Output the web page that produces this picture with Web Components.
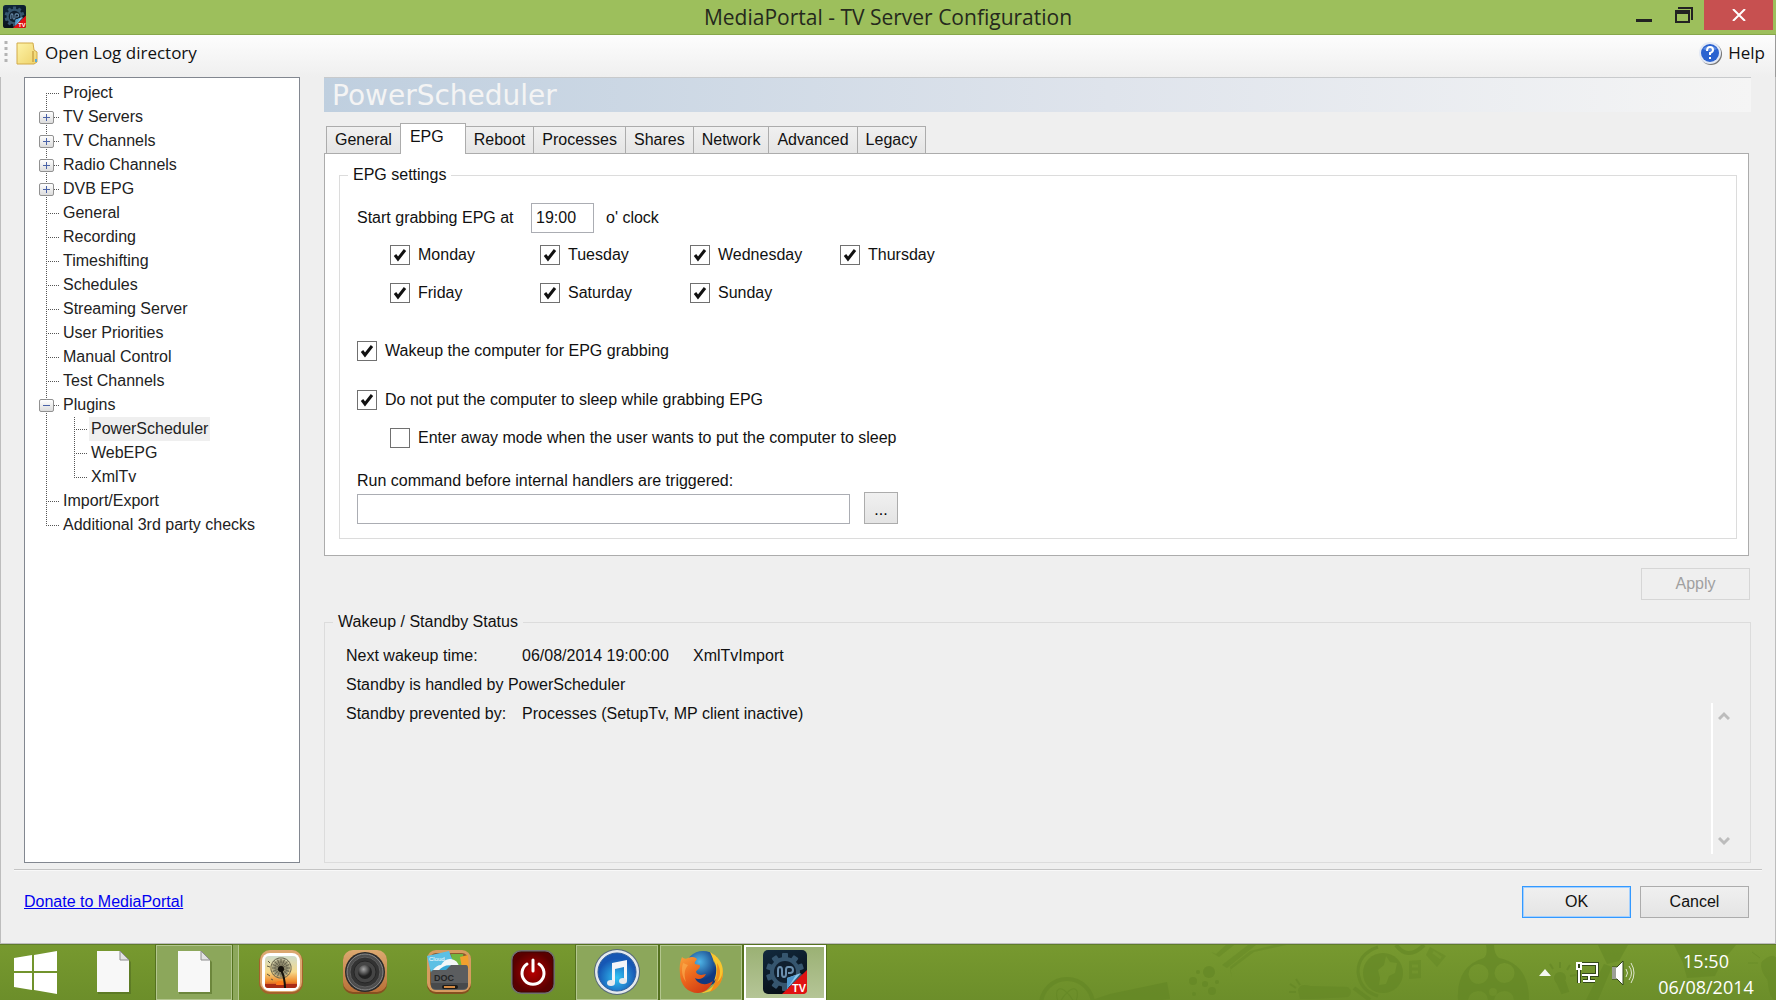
<!DOCTYPE html>
<html lang="en">
<head>
<meta charset="utf-8">
<title>MediaPortal - TV Server Configuration</title>
<style>
  html, body { height: 100%; margin: 0; }
  body {
    --ui: "Liberation Sans", Arial, sans-serif;
    --segoe: "Open Sans", "Noto Sans", sans-serif;
    --face: #efefef;
    --line: #dcdcdc;
    --edge: #acacac;
    display: flex;
    flex-direction: column;
    background: var(--face);
    color: #111;
    font: 16px/20px var(--ui);
  }
  setup-window { flex: 1; }
</style>
</head>
<body>

<setup-window caption="MediaPortal - TV Server Configuration">
  <tree-view slot="tree">
    <tree-node label="Project"></tree-node>
    <tree-node label="TV Servers" state="closed"></tree-node>
    <tree-node label="TV Channels" state="closed"></tree-node>
    <tree-node label="Radio Channels" state="closed"></tree-node>
    <tree-node label="DVB EPG" state="closed"></tree-node>
    <tree-node label="General"></tree-node>
    <tree-node label="Recording"></tree-node>
    <tree-node label="Timeshifting"></tree-node>
    <tree-node label="Schedules"></tree-node>
    <tree-node label="Streaming Server"></tree-node>
    <tree-node label="User Priorities"></tree-node>
    <tree-node label="Manual Control"></tree-node>
    <tree-node label="Test Channels"></tree-node>
    <tree-node label="Plugins" state="open">
      <tree-node label="PowerScheduler" selected></tree-node>
      <tree-node label="WebEPG"></tree-node>
      <tree-node label="XmlTv"></tree-node>
    </tree-node>
    <tree-node label="Import/Export"></tree-node>
    <tree-node label="Additional 3rd party checks"></tree-node>
  </tree-view>

  <section-header slot="page">PowerScheduler</section-header>
  <tab-panel slot="page" tabs="General,EPG,Reboot,Processes,Shares,Network,Advanced,Legacy" current="EPG">
    <epg-settings></epg-settings>
  </tab-panel>
  <push-button slot="page" class="apply" label="Apply" disabled></push-button>
  <standby-status slot="page"></standby-status>
</setup-window>

<task-bar time="15:50" date="06/08/2014">
  <task-item icon="page" label="Document"></task-item>
  <task-item icon="page" label="Documents" state="stacked"></task-item>
  <task-item icon="photo" label="Photos"></task-item>
  <task-item icon="speaker" label="Speaker"></task-item>
  <task-item icon="docs" label="Files"></task-item>
  <task-item icon="power" label="Power"></task-item>
  <task-item icon="itunes" label="iTunes" state="running"></task-item>
  <task-item icon="firefox" label="Firefox" state="running"></task-item>
  <task-item icon="mediaportal" label="MediaPortal" state="active"></task-item>
</task-bar>

<script>
const GEAR = Array.from({ length: 10 }, (_, i) =>
  `<rect x="19" y="3" width="6" height="8" rx="1" transform="rotate(${i * 36} 22 22)"/>`).join('');

const DANDELION = Array.from({ length: 16 }, (_, i) =>
  `<path d="M22 18V9M20 8h4M21 12h2" transform="rotate(${i * 22.5} 22 18)"/>`).join('');

const ICONS = {
  page: `
    <path d="M6 2h24l9 9v32H6z" fill="#4b661d" opacity=".5" transform="translate(1 1)"/>
    <path d="M6 1h23l9 9v32H6z" fill="#f8f8f8"/>
    <path d="M29 1v9h9z" fill="#e2e2e2" stroke="#8c8c8c"/>`,

  photo: `
    <defs><linearGradient id="dusk" x2="0" y2="1">
      <stop stop-color="#cfdccb"/><stop offset=".5" stop-color="#f6d98a"/>
      <stop offset=".8" stop-color="#ef8a2c"/><stop offset="1" stop-color="#b9281a"/>
    </linearGradient></defs>
    <rect y="1" width="44" height="43" rx="11" fill="#a4622b"/>
    <rect x="1" width="42" height="42" rx="10" fill="#dba770"/>
    <rect x="3" y="3" width="38" height="38" rx="8" fill="#fff"/>
    <rect x="6" y="6" width="32" height="32" rx="4" fill="url(#dusk)"/>
    <path d="M6 34h32v1a3 3 0 0 1-3 3H9a3 3 0 0 1-3-3z" fill="#a92c16"/>
    <path d="M17 35a4 4 0 0 1 8 0z" fill="#ff7a1c"/>
    <circle cx="22" cy="18" r="9" fill="#a9a483"/>
    <g fill="none" stroke="#6a6650" stroke-width="1">${DANDELION}</g>
    <circle cx="22" cy="19" r="3" fill="#15120c"/>
    <path d="M22 20q4 8 4 18" fill="none" stroke="#15120c" stroke-width="2"/>
    <path d="M8 16l3 1M8 24l3 2M12 29l2 1M9 11l2 2" stroke="#5d5a42"/>`,

  speaker: `
    <defs><radialGradient id="dome" cx=".4" cy=".3"><stop stop-color="#a5a5a5"/><stop offset="1" stop-color="#222"/></radialGradient>
    <linearGradient id="wood" x2="0" y2="1"><stop stop-color="#dca970"/><stop offset="1" stop-color="#b97138"/></linearGradient></defs>
    <rect y="1" width="44" height="43" rx="10" fill="#86501f"/>
    <rect width="44" height="42" rx="10" fill="url(#wood)"/>
    <circle cx="22" cy="22" r="20" fill="#2a2a2a"/>
    <circle cx="22" cy="22" r="18" fill="#4e4e4e" stroke="#8b8b8b"/>
    <circle cx="22" cy="22" r="15" fill="#333" stroke="#5e5e5e"/>
    <circle cx="22" cy="22" r="11" fill="#454545" stroke="#262626"/>
    <circle cx="22" cy="22" r="7" fill="url(#dome)"/>`,

  docs: `
    <rect y="1" width="44" height="43" rx="9" fill="#86501f"/>
    <rect width="44" height="42" rx="9" fill="#d69c60"/>
    <rect x="3" y="3" width="38" height="36" rx="6" fill="#8a5a2e"/>
    <path d="M24 4h12l2 14H26z" fill="#72b53e"/>
    <path d="M33 7l8-2 1 13h-7z" fill="#f1a02e"/>
    <path d="M0 6l22-5 7 18-25 4z" fill="#5cc0e4"/>
    <path d="M6 20q4-5 8-5 4-7 10-6 7 1 8 8l2 4" fill="#f4f7f8"/>
    <path d="M11 21q8-9 18-4l2 4" fill="#35a7d6"/>
    <text x="2" y="11" font-family="Liberation Sans, sans-serif" font-size="6" fill="#fff">Cloud</text>
    <path d="M4 23q0-3 3-3h12l5-5h15q2 0 2 3v17q0 5-5 5H9q-5 0-5-5z" fill="#5b5d5f"/>
    <path d="M4 33h37v2q0 4-5 4H9q-5 0-5-4z" fill="#484a4c"/>
    <text x="7" y="31" font-family="Liberation Sans, sans-serif" font-size="9" font-weight="700" fill="#232425">DOC</text>
    <rect x="15" y="35" width="16" height="4" rx="2" fill="#1c1a18"/><rect x="17" y="36" width="11" height="2" fill="#d58b44"/>`,

  power: `
    <defs><radialGradient id="red"><stop stop-color="#b80000"/><stop offset="1" stop-color="#5a0000"/></radialGradient></defs>
    <rect width="44" height="44" rx="10" fill="#6f6f6f"/>
    <rect x="2" y="2" width="40" height="40" rx="8" fill="url(#red)" stroke="#3f0505"/>
    <path d="M16 14a11 11 0 1 0 12 0" fill="none" stroke="#fff" stroke-width="3" stroke-linecap="round"/>
    <path d="M22 10v11" stroke="#fff" stroke-width="3" stroke-linecap="round"/>`,

  itunes: `
    <defs><radialGradient id="blue" cy=".65"><stop stop-color="#32c4f4"/><stop offset="1" stop-color="#1657b4"/></radialGradient></defs>
    <circle cx="22" cy="22" r="23" fill="#56697a"/>
    <circle cx="22" cy="22" r="22" fill="#e4e9ee"/>
    <circle cx="22" cy="22" r="19" fill="url(#blue)" stroke="#2b5c9c"/>
    <path d="M17 13l15-3v21h-3V17l-9 2v14h-3z" fill="#f4f6f8"/>
    <ellipse cx="16" cy="33" rx="4" ry="3" fill="#e6eaee"/>
    <ellipse cx="28" cy="31" rx="4" ry="3" fill="#e6eaee"/>`,

  firefox: `
    <defs><radialGradient id="globe" cx=".4" cy=".3"><stop stop-color="#4fb6e8"/><stop offset="1" stop-color="#12397f"/></radialGradient>
    <linearGradient id="fox" x2=".6" y2="1"><stop stop-color="#f9a13a"/><stop offset=".5" stop-color="#ee6a1d"/><stop offset="1" stop-color="#d33f14"/></linearGradient></defs>
    <circle cx="24" cy="19" r="18" fill="url(#globe)"/>
    <path d="M31 2c8 4 13 11 13 20 0 12-10 21-22 21 9-3 15-8 16-15l-3 3c3-8 3-14 0-20l1 6c-1-6-3-11-5-15z" fill="#f8c62e"/>
    <path d="M38 13c4 6 4 13 0 19 5-3 6-9 5-14 3 12-4 21-12 24 5-7 8-18 7-29z" fill="#f28c1c"/>
    <path d="M3 7c2 2 4 2 6 1 4-2 7-1 9 1-1 2-3 3-2 5 2 1 5 0 5 2 0 3-4 4-4 6 2 4 7 3 10 2-2 5-8 6-11 4 3 7 12 8 18 3-3 8-9 12-15 12C9 43 1 35 1 24 0 17 1 12 3 7z" fill="url(#fox)"/>
    <path d="M4 13c-2 7-1 14 3 19-2-7-2-12 2-17z" fill="#fbb254" opacity=".6"/>`,

  mediaportal: `
    <defs><linearGradient id="navy" x2=".4" y2="1"><stop stop-color="#122a3e"/><stop offset="1" stop-color="#070f18"/></linearGradient></defs>
    <rect width="44" height="44" rx="5" fill="url(#navy)"/>
    <g fill="#36566f">${GEAR}<circle cx="22" cy="22" r="15"/></g>
    <circle cx="22" cy="22" r="11" fill="#101f2e"/>
    <path d="M15 27v-7q0-3 2-3t2 3v4q0 3 2 3t2-3v-4q0-3 2-3h2q3 0 3 3t-3 3h-2" fill="none" stroke="#6b8fae" stroke-width="2"/>
    <path d="M44 20v20q0 4-4 4H19z" fill="#e01212"/>
    <path d="M24 39V28l14-5z" fill="#8cc8ee"/>
    <path d="M24 39V28l9-3z" fill="#4f97cc"/>
    <text x="29" y="42" font-family="Liberation Sans, sans-serif" font-size="11" font-weight="700" fill="#fff">TV</text>`
};

function icon(name, size) {
  return `<svg viewBox="0 0 44 44" width="${size}" height="${size}" overflow="visible" aria-hidden="true">${ICONS[name]}</svg>`;
}

/** Base: every element renders once into an open shadow root */
class UiElement extends HTMLElement {
  constructor() {
    super();
    this.attachShadow({ mode: 'open' });
  }

  connectedCallback() {
    this.shadowRoot.innerHTML = this.render();
  }
}

/** <setup-window> — title bar, tool strip, tree + page, footer. Slots: tree, page */
class SetupWindow extends UiElement {
  render() {
    const caption = this.getAttribute('caption') || '';
    return `
      <style>
        :host { display: flex; flex-direction: column; min-height: 0; }

        header {
          display: grid;
          grid-template-columns: 1fr auto 1fr;
          align-items: center;
          height: 34px;
          background: #9dbf5c;
          border-bottom: 1px solid #87a74b;
        }
        header svg { display: block; }
        .app { padding: 0 0 2px 3px; }
        h1 { margin: 0; font: 21px/34px var(--segoe); color: #25291d; }
        .controls { display: flex; justify-content: flex-end; align-self: start; padding-right: 3px; }
        .controls button {
          width: 40px; height: 30px; padding: 0; border: 0; background: none;
          display: grid; place-items: center;
        }
        .controls button.close { width: 69px; background: #c75050; }

        .strip {
          display: flex;
          align-items: center;
          height: 42px;
          background: linear-gradient(#fdfdfd, #efefef);
          border-right: 1px solid #9a9a9a;
        }
        .strip button {
          display: flex; align-items: center; gap: 6px;
          padding: 0 10px 6px 8px; border: 0; background: none;
          font: 17px/24px var(--segoe); color: #111;
        }
        .strip .grip { padding: 0 0 6px 4px; }
        .strip .spacer { flex: 1; }

        .client {
          flex: 1;
          display: flex;
          flex-direction: column;
          min-height: 0;
          border: solid #bdbdbd;
          border-width: 0 1px 1px;
        }
        .body {
          flex: 1;
          display: flex;
          gap: 24px;
          padding: 0 24px 0 23px;
          min-height: 0;
        }
        .page { flex: 1; display: flex; flex-direction: column; min-width: 0; }
        ::slotted(tree-view) { width: 274px; }
        ::slotted(tab-panel) { margin: 11px 2px 12px 0; }
        ::slotted(.apply) { align-self: flex-end; margin-right: 1px; margin-bottom: 12px; }
        ::slotted(standby-status) { flex: 1; }

        footer {
          display: flex;
          align-items: center;
          gap: 9px;
          margin: 6px 13px 0;
          padding: 16px 13px 25px 10px;
          border-top: 1px solid #c4c4c4;
          box-shadow: inset 0 1px #f8f8f8;
        }
        footer a { color: #0000f0; margin-right: auto; }
      </style>
      <header>
        <span class="app">${icon('mediaportal', 23)}</span>
        <h1>${caption}</h1>
        <div class="controls">
          <button aria-label="Minimize"><svg width="16" height="16"><path d="M0 12h16v3H0z" fill="#222"/></svg></button>
          <button aria-label="Restore"><svg width="18" height="16"><path d="M3 0h15v13h-2V2H3zM0 3h15v13H0zM2 7v7h11V7z" fill="#222" fill-rule="evenodd"/></svg></button>
          <button class="close" aria-label="Close"><svg width="14" height="12"><path d="M1 0l12 12M13 0L1 12" stroke="#fff" stroke-width="2"/></svg></button>
        </div>
      </header>
      <div class="strip">
        <span class="grip"><svg width="4" height="22"><path d="M2 1v21" stroke="#b4b4b4" stroke-width="3" stroke-dasharray="3 3"/></svg></span>
        <button>
          <svg width="23" height="24"><defs><linearGradient id="f" x2="1" y2="1"><stop stop-color="#fdf3a8"/><stop offset="1" stop-color="#eed26a"/></linearGradient></defs>
            <path d="M1 2h16l1 7 3 2v10l-3 2H1z" fill="url(#f)" stroke="#d2aa48"/><path d="M17 10v11" stroke="#b98b2c"/><path d="M19 18h2v3h-2z" fill="#5aa7d8"/></svg>
          Open Log directory
        </button>
        <span class="spacer"></span>
        <button>
          <svg width="24" height="24"><circle cx="13" cy="13" r="11" fill="#777"/><circle cx="12" cy="12" r="11" fill="#e3e9f5"/><circle cx="12" cy="12" r="9" fill="#2a62d0"/>
            <path d="M5 8a8 6 0 0 1 14 0q-7 4-14 0z" fill="#7fa8ee" opacity=".6"/>
            <path d="M9 10q0-4 3-4t3 3q0 2-3 3v2M12 16v2" fill="none" stroke="#fff" stroke-width="2"/></svg>
          Help
        </button>
      </div>
      <div class="client">
        <div class="body">
          <slot name="tree"></slot>
          <main class="page"><slot name="page"></slot></main>
        </div>
        <footer>
          <a href="#donate">Donate to MediaPortal</a>
          <push-button label="OK" primary></push-button>
          <push-button label="Cancel"></push-button>
        </footer>
      </div>
    `;
  }
}

/** <push-button> — label, primary, disabled */
class PushButton extends UiElement {
  render() {
    const off = this.hasAttribute('disabled') ? 'disabled' : '';
    return `
      <style>
        :host { display: block; }
        button {
          display: block;
          width: 109px;
          height: 32px;
          padding: 0;
          border: 1px solid var(--edge);
          background: linear-gradient(#f0f0f0, #e4e4e4);
          font: inherit;
          color: #111;
        }
        :host([primary]) button { border-color: #3399ff; box-shadow: inset 0 0 0 1px #a3d0ff; }
        button:disabled { background: none; border-color: #d6d6d6; color: #a0a0a0; }
      </style>
      <button ${off}>${this.getAttribute('label')}</button>
    `;
  }
}

/** <tree-view> — frame of the navigation tree */
class TreeView extends UiElement {
  render() {
    return `
      <style>
        :host {
          display: block;
          padding-top: 3px;
          border: 1px solid #828790;
          background: #fff;
          color: #222;
        }
        ::slotted(:first-child) { --line-top: 12px; }
      </style>
      <slot></slot>
    `;
  }
}

/** <tree-node> — label, state (open | closed), selected; nested nodes go in the slot */
class TreeNode extends UiElement {
  render() {
    const state = this.getAttribute('state');
    const box = state ? `
      <button aria-label="${state === 'open' ? 'Collapse' : 'Expand'}">
        <svg width="7" height="7"><path d="M0 3h7v1H0z${state === 'closed' ? 'M3 0h1v7H3z' : ''}" fill="#4b63a7"/></svg>
      </button>` : '';
    return `
      <style>
        :host {
          display: block;
          background: repeating-linear-gradient(#555 0 1px, transparent 1px 2px) 21px var(--line-top, 0px) / 1px 100% no-repeat;
        }
        :host(:last-child) { background-size: 1px 13px; }
        .row { display: flex; align-items: center; height: 24px; }
        .gutter {
          box-sizing: border-box;
          width: 36px;
          height: 24px;
          padding: 6px 0 0 14px;
          background: repeating-linear-gradient(90deg, #555 0 1px, transparent 1px 2px) 21px 12px / 13px 1px no-repeat;
        }
        button {
          display: grid;
          place-items: center;
          box-sizing: border-box;
          width: 15px;
          height: 13px;
          padding: 0;
          border: 1px solid #919191;
          border-radius: 2px;
          background: linear-gradient(#fff, #dcdcdc);
        }
        .label { padding: 0 2px; line-height: 24px; }
        :host([selected]) .label { background: #efefef; }
        .kids { padding-left: 28px; }
      </style>
      <div class="row"><span class="gutter">${box}</span><span class="label">${this.getAttribute('label')}</span></div>
      <div class="kids"><slot></slot></div>
    `;
  }
}

class SectionHeader extends UiElement {
  render() {
    return `
      <style>
        :host {
          display: block;
          border-top: 1px solid #c8cacc;
          background: linear-gradient(90deg, #bfcfdf, #dfe4ec 55%, #f5f5f5);
        }
        h2 { margin: 0; padding: 1px 0 0 8px; font: 28px/33px "DejaVu Sans", Verdana, sans-serif; color: #f4f4f4; }
      </style>
      <h2><slot></slot></h2>
    `;
  }
}

/** <tab-panel> — tabs (comma list), current */
class TabPanel extends UiElement {
  render() {
    const current = this.getAttribute('current');
    const tabs = this.getAttribute('tabs').split(',').map(name =>
      `<button role="tab" aria-selected="${name === current}">${name}</button>`).join('');
    return `
      <style>
        :host { display: block; }
        nav { display: flex; align-items: flex-end; padding-left: 2px; height: 31px; margin-bottom: -1px; }
        button {
          height: 28px;
          padding: 0 8px;
          margin-right: -1px;
          border: 1px solid var(--edge);
          background: linear-gradient(#f0f0f0, #e5e5e5);
          font: inherit;
          color: #111;
        }
        button[aria-selected="true"] {
          position: relative;
          height: 31px;
          padding: 0 21px 4px 9px;
          border-bottom: 0;
          background: #fff;
        }
        .panel { border: 1px solid var(--edge); background: #fff; padding: 11px 11px 16px 14px; }
      </style>
      <nav role="tablist">${tabs}</nav>
      <div class="panel" role="tabpanel"><slot></slot></div>
    `;
  }
}

class CheckBox extends UiElement {
  render() {
    const on = this.hasAttribute('checked') ? 'checked' : '';
    return `
      <style>
        :host { display: block; }
        label { display: flex; align-items: center; gap: 8px; height: 20px; }
        .box { display: grid; }
        input, svg { grid-area: 1 / 1; }
        input {
          appearance: none;
          box-sizing: border-box;
          width: 20px;
          height: 20px;
          margin: 0;
          border: 1px solid #707070;
          background: #fff;
        }
        svg { pointer-events: none; visibility: hidden; }
        input:checked + svg { visibility: visible; }
      </style>
      <label>
        <span class="box"><input type="checkbox" ${on}><svg width="20" height="20"><path d="M5 10l3 4 7-9" fill="none" stroke="#111" stroke-width="3"/></svg></span>
        <slot></slot>
      </label>
    `;
  }
}

/** <group-box> — framed fieldset with a caption */
class GroupBox extends UiElement {
  render() {
    return `
      <style>
        :host { display: flex; }
        fieldset {
          flex: 1;
          display: flex;
          flex-direction: column;
          min-width: 0;
          margin: 0;
          padding: var(--group-padding, 10px);
          border: 1px solid var(--line);
        }
        legend { padding: 0 5px; margin-left: var(--legend-indent, 0); line-height: 20px; }
      </style>
      <fieldset><legend>${this.getAttribute('label')}</legend><slot></slot></fieldset>
    `;
  }
}

class EpgSettings extends UiElement {
  render() {
    const days = ['Monday', 'Tuesday', 'Wednesday', 'Thursday', 'Friday', 'Saturday', 'Sunday'];
    return `
      <style>
        :host { display: block; }
        group-box { --group-padding: 18px 17px 14px; --legend-indent: -9px; }
        .start { display: flex; align-items: center; }
        input {
          box-sizing: border-box;
          height: 30px;
          padding: 0 4px;
          border: 1px solid #abadb3;
          background: #fff;
          font: inherit;
          color: #111;
        }
        .start label { width: 174px; }
        .start input { width: 63px; margin-right: 12px; }
        .days {
          display: grid;
          grid-template-columns: repeat(4, 150px);
          row-gap: 18px;
          margin: 12px 0 38px 33px;
        }
        .away { margin: 18px 0 23px 33px; }
        .sleep { margin-top: 29px; }
        .run { display: flex; align-items: flex-end; gap: 14px; margin-top: 1px; }
        .run input { width: 493px; }
        .run button {
          width: 34px; height: 32px; padding: 4px 0 0;
          border: 1px solid var(--edge);
          background: linear-gradient(#f0f0f0, #e4e4e4);
          font: inherit;
        }
      </style>
      <group-box label="EPG settings">
        <div class="start">
          <label for="start">Start grabbing EPG at</label>
          <input id="start" value="19:00">
          <span>o' clock</span>
        </div>
        <div class="days">${days.map(d => `<check-box checked>${d}</check-box>`).join('')}</div>
        <check-box checked>Wakeup the computer for EPG grabbing</check-box>
        <check-box checked class="sleep">Do not put the computer to sleep while grabbing EPG</check-box>
        <check-box class="away">Enter away mode when the user wants to put the computer to sleep</check-box>
        <label for="command">Run command before internal handlers are triggered:</label>
        <div class="run"><input id="command"><button aria-label="Browse">...</button></div>
      </group-box>
    `;
  }
}

class StandbyStatus extends UiElement {
  render() {
    return `
      <style>
        :host { display: flex; }
        group-box { flex: 1; --group-padding: 9px 15px 8px 21px; --legend-indent: -13px; }
        .line { display: grid; grid-template-columns: 176px 171px 1fr; line-height: 29px; }
        .handled { grid-column: 1 / 3; }
        .fill { flex: 1; grid-template-columns: 176px 1fr 24px; }
        .scroll {
          display: flex;
          flex-direction: column;
          justify-content: space-between;
          align-items: center;
          margin-top: 4px;
          padding: 8px 0;
          border-left: 2px solid #fff;
        }
      </style>
      <group-box label="Wakeup / Standby Status">
        <div class="line"><span>Next wakeup time:</span><span>06/08/2014 19:00:00</span><span>XmlTvImport</span></div>
        <div class="line"><span class="handled">Standby is handled by PowerScheduler</span></div>
        <div class="line fill">
          <span>Standby prevented by:</span><span>Processes (SetupTv, MP client inactive)</span>
          <div class="scroll">
            <svg width="12" height="10"><path d="M1 8l5-5 5 5" fill="none" stroke="#bcbcbc" stroke-width="3"/></svg>
            <svg width="12" height="10"><path d="M1 2l5 5 5-5" fill="none" stroke="#bcbcbc" stroke-width="3"/></svg>
          </div>
        </div>
      </group-box>
    `;
  }
}

/** <task-item> — icon, label, state (running | stacked | active) */
class TaskItem extends UiElement {
  render() {
    return `
      <style>
        :host { display: flex; width: 84px; padding: 0 1px; box-sizing: border-box; z-index: 1; }
        button {
          flex: 1;
          display: grid;
          place-items: center;
          padding: 0 0 1px;
          border: 1px solid transparent;
          background: none;
        }
        :host([state]) button {
          border-color: #b3c68e;
          background: #8ca75b;
          outline: 1px solid #54711f;
        }
        :host([state="active"]) button { border: 2px solid #fff; background: linear-gradient(#9bb174, #b5c597); }
        :host([state="stacked"]) button { margin-right: 5px; }
        :host([state="stacked"]) { border-right: 1px solid #b3c68e; background: linear-gradient(#8ca75b, #8ca75b) right / 6px no-repeat; }
      </style>
      <button aria-label="${this.getAttribute('label')}">${icon(this.getAttribute('icon'), 44)}</button>
    `;
  }
}

/** <task-bar> — time, date; task items go in the slot */
class TaskBar extends UiElement {
  render() {
    return `
      <style>
        :host {
          position: relative;
          display: flex;
          height: 56px;
          box-sizing: border-box;
          border-top: 1px solid #5f7c2b;
          background: linear-gradient(#77992f, #6c8e2a);
          color: #fff;
        }
        .start { width: 71px; padding: 0; border: 0; background: none; }
        .start svg { display: block; margin: auto; }
        /* faint wallpaper doodles behind the tray */
        .doodles { position: absolute; right: 0; top: 0; }
        .tray { display: flex; align-items: center; margin-left: auto; z-index: 1; }
        .tray button { padding: 0; border: 0; background: none; display: flex; }
        .arrow { margin-right: 24px; }
        .net { margin-right: 12px; }
        time { display: block; width: 140px; padding-top: 3px; text-align: center; font: 18px/26px var(--segoe); }
      </style>
      <svg class="doodles" width="760" height="55" viewBox="1016 945 760 55" fill="#638625" opacity=".6">
        <g fill="none" stroke="#638625" stroke-width="4"><circle cx="1067" cy="1005" r="26"/><ellipse cx="1067" cy="1004" rx="7" ry="17" transform="rotate(-30 1067 1004)" stroke-width="1"/><ellipse cx="1067" cy="1004" rx="7" ry="17" transform="rotate(30 1067 1004)" stroke-width="1"/></g>
        <path d="M1092 1000l18-6 57-12 3 17-8 1z"/>
        <g><circle cx="1209" cy="972" r="6"/><circle cx="1193" cy="981" r="4"/><circle cx="1205" cy="984" r="3"/><circle cx="1212" cy="991" r="4"/><circle cx="1217" cy="982" r="2"/><circle cx="1198" cy="972" r="2"/><circle cx="1194" cy="994" r="2"/></g>
        <path d="M1211 952l8 5 15-12h-8l-10 9zM1222 965l26-20h8l-29 23zM1230 970l24-18 32-7h-12l-24 6-20 16 2 10z" opacity=".7"/>
        <path d="M1298 990q2-7 12-4l38 1q6 5 0 10l-36 2h-12z" opacity=".8"/><path d="M1289 992h7M1290 984l6 4M1296 979l4 6" stroke="#638625" stroke-width="2"/>
        <circle cx="1383" cy="973" r="20"/><path d="M1378 996q-18-5-20-24 0-18 20-25" fill="none" stroke="#638625" stroke-width="3"/>
        <path d="M1386 956l4 6 7 1-2 10-6 3-3 8-7 1 1-7-2-8 6-5z" fill="#72942d"/>
        <path d="M1396 945q12 16 28 0M1354 988l16 12" fill="none" stroke="#638625" stroke-width="4"/>
        <path d="M1430 947l16 9-9 11-11-12zM1409 961l12-1v18l-12 1z" opacity=".7"/>
        <path d="M1433 952l8 6M1412 966h6M1412 972h6" stroke="#72942d" stroke-width="3"/>
        <path fill-rule="evenodd" d="M1486 945h8q0 9 5 13 30 6 30 42H1458q-2-34 26-42 4-4 2-13zM1478 964a10 10 0 1 0 1 20 10 10 0 0 0-1-20M1504 963a10 10 0 1 0 1 20 10 10 0 0 0-1-20M1493 988a4 4 0 1 0 0 8 4 4 0 0 0 0-8M1478 991q-9 1-10 9h20q-1-9-10-9M1504 991q-9 1-10 9h20q-1-9-10-9"/>
        <circle cx="1560" cy="978" r="6"/><path d="M1557 982h8l3 9-6 2zM1549 973l-5-2M1553 969l-3-5M1560 968v-6M1567 970l3-5M1570 976l6-1" stroke="#638625" stroke-width="2"/>
        <path d="M1598 945h30l-9 16-12 3zM1604 964l8 3-14 33h-12zM1674 945h62q-6 8-13 14l-8 17-28 2-4-15z" opacity=".9"/>
        <path d="M1762 962q10-9 14-4v42q-6 0-8-20-8-10-6-18zM1748 963h10M1752 952l8 6" stroke="#638625" opacity=".7"/>
      </svg>
      <button class="start" aria-label="Start">
        <svg width="43" height="43" fill="#fff"><path d="M0 7l18-3v16H0zM20 4l23-4v20H20zM0 22h18v17L0 36zM20 22h23v21l-23-4z"/></svg>
      </button>
      <slot></slot>
      <div class="tray">
        <button class="arrow" aria-label="Show hidden icons"><svg width="12" height="8"><path d="M6 0l6 7H0z" fill="#f4f6f0"/></svg></button>
        <button class="net" aria-label="Network"><svg width="25" height="23"><g fill="none" stroke="#33471a" stroke-width="4"><path d="M7 3h15v11H7M14 14v6M8 20h12M4 1v21"/></g><g fill="none" stroke="#fff" stroke-width="2"><path d="M7 3h15v11H7M14 14v6M8 20h12M4 8v14M2 2h4v6H2z"/></g></svg></button>
        <button aria-label="Volume"><svg width="24" height="24"><path d="M0 6h5l6-6v24l-6-6H0z" fill="#fff" stroke="#33471a"/><path d="M0 6h4v12H0z" fill="#9c9f96"/><path d="M14 8q3 4 0 8M17 5q5 7 0 14M19 2q6 10 0 20" fill="none" stroke="#dfe6cf"/></svg></button>
        <time>${this.getAttribute('time')}<br>${this.getAttribute('date')}</time>
      </div>
    `;
  }
}

customElements.define('push-button', PushButton);
customElements.define('group-box', GroupBox);
customElements.define('check-box', CheckBox);
customElements.define('tree-view', TreeView);
customElements.define('tree-node', TreeNode);
customElements.define('section-header', SectionHeader);
customElements.define('tab-panel', TabPanel);
customElements.define('epg-settings', EpgSettings);
customElements.define('standby-status', StandbyStatus);
customElements.define('setup-window', SetupWindow);
customElements.define('task-item', TaskItem);
customElements.define('task-bar', TaskBar);
</script>
</body>
</html>
